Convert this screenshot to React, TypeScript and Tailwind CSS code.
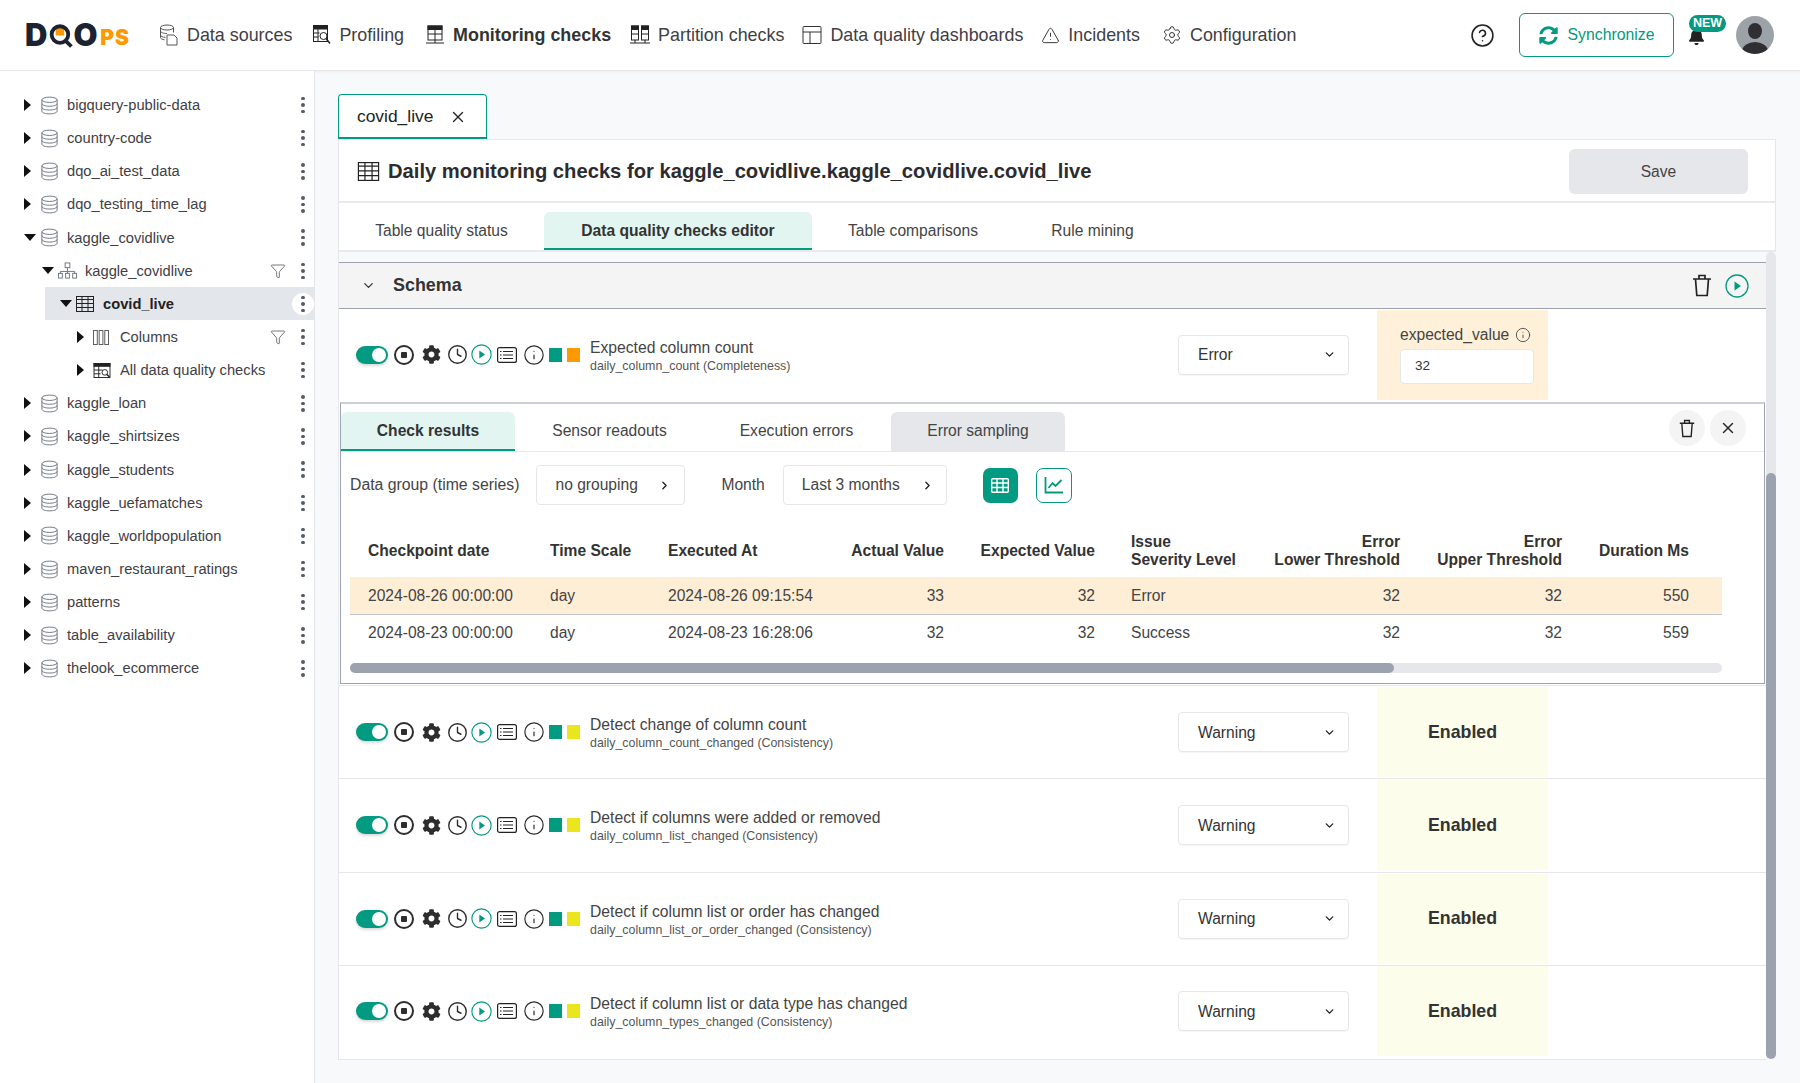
import { ChevronDown, ChevronRight, CircleHelp, Clock, Filter, Info, Settings, TriangleAlert, X } from 'lucide-react';
import { FaBell, FaCog, FaSyncAlt } from 'react-icons/fa';

// --- small drawn icons ---
function DbIcon({ className = 'w-[19px] h-[19px] text-[#6b7280]' }: { className?: string }) {
  return (
    <svg viewBox="0 0 20 20" fill="none" stroke="currentColor" strokeWidth="1" className={className}>
      <ellipse cx="10" cy="4" rx="8" ry="2.8" />
      <path d="M2 4v12c0 1.6 3.6 2.8 8 2.8s8-1.2 8-2.8V4" />
      <path d="M2 8c0 1.6 3.6 2.8 8 2.8s8-1.2 8-2.8" />
      <path d="M2 12c0 1.6 3.6 2.8 8 2.8s8-1.2 8-2.8" />
    </svg>
  );
}

function SchemaIcon() {
  return (
    <svg viewBox="0 0 20 18" fill="none" stroke="#6b7280" strokeWidth="1" className="w-[19px] h-[17px]">
      <rect x="7.5" y="1" width="5" height="5" />
      <path d="M10 6v4M2.5 12v-2h15v2M10 10v2" />
      <rect x="0.5" y="12" width="4" height="5" />
      <rect x="8" y="12" width="4" height="5" />
      <rect x="15.5" y="12" width="4" height="5" />
    </svg>
  );
}

function TableIcon({ className = 'w-[18px] h-[16px]' }: { className?: string }) {
  return (
    <svg viewBox="0 0 18 16" fill="none" stroke="#222" strokeWidth="1" className={className}>
      <rect x="0.5" y="0.5" width="17" height="15" />
      <path d="M0.5 3.5h17M0.5 7.5h17M0.5 11.5h17M6 0.5v15M12 0.5v15" />
    </svg>
  );
}

function ColumnsIcon() {
  return (
    <svg viewBox="0 0 18 16" fill="none" stroke="#555" strokeWidth="1" className="w-[17px] h-[15px]">
      <rect x="0.5" y="0.5" width="4" height="15" />
      <rect x="6.5" y="0.5" width="4" height="15" />
      <rect x="12.5" y="0.5" width="4" height="15" />
    </svg>
  );
}

function AllChecksIcon() {
  return (
    <svg viewBox="0 0 18 16" fill="none" stroke="#222" strokeWidth="1" className="w-[18px] h-[15px]">
      <rect x="0.5" y="0.5" width="17" height="15" />
      <rect x="0.5" y="0.5" width="17" height="3" fill="#222" />
      <path d="M0.5 7.5h9M0.5 11.5h7M5.5 3.5v12" />
      <circle cx="12" cy="10" r="3" />
      <path d="M14 12l3 3" strokeWidth="1.5" />
    </svg>
  );
}

function Dots({ active }: { active?: boolean }) {
  return (
    <span className={`flex w-[22px] h-[22px] flex-col items-center justify-center gap-[3px] rounded-full ${active ? 'bg-white' : ''}`}>
      <span className="w-[3.5px] h-[3.5px] rounded-full bg-[#555b66]" />
      <span className="w-[3.5px] h-[3.5px] rounded-full bg-[#555b66]" />
      <span className="w-[3.5px] h-[3.5px] rounded-full bg-[#555b66]" />
    </span>
  );
}

function Caret({ open }: { open?: boolean }) {
  return open ? (
    <span className="w-0 h-0 border-x-[6px] border-x-transparent border-t-[7px] border-t-[#111]" />
  ) : (
    <span className="w-0 h-0 border-y-[6px] border-y-transparent border-l-[7px] border-l-[#111]" />
  );
}

function TrashIcon({ className = 'w-[20px] h-[23px]' }: { className?: string }) {
  return (
    <svg viewBox="0 0 20 23" fill="none" stroke="#222" strokeWidth="1.7" className={className}>
      <path d="M1 5h18M3.5 5l1.3 16.5h10.4L16.5 5M7 5V1.5h6V5" />
    </svg>
  );
}

function PlayIcon({ className }: { className: string }) {
  return (
    <svg viewBox="0 0 24 24" className={className}>
      <circle cx="12" cy="12" r="11" fill="none" stroke="#029a80" strokeWidth="1.3" />
      <path d="M9.5 7.5l6.5 4.5-6.5 4.5z" fill="#029a80" />
    </svg>
  );
}

function DataSourcesIcon() {
  return (
    <svg viewBox="0 0 20 22" fill="none" stroke="#555" strokeWidth="1" className="w-[20px] h-[22px]">
      <ellipse cx="8" cy="3.5" rx="6.5" ry="2.5" />
      <path d="M1.5 3.5v10c0 1 1.5 2 4 2.3M14.5 3.5v5M1.5 7c0 1.4 3 2.5 6.5 2.5M1.5 11c0 1.2 2 2.2 5 2.4" />
      <path d="M8 11h7l3 3v7H8z" />
    </svg>
  );
}

function ProfilingIcon() {
  return (
    <svg viewBox="0 0 18 20" fill="none" stroke="#222" strokeWidth="1" className="w-[18px] h-[20px]">
      <rect x="0.5" y="0.5" width="14" height="16" />
      <rect x="0.5" y="0.5" width="14" height="3.5" fill="#222" />
      <path d="M0.5 8h6M0.5 12h5M5 4v12" />
      <circle cx="10.5" cy="11" r="3.5" fill="#fff" />
      <path d="M13 13.5l4 5" strokeWidth="1.5" />
    </svg>
  );
}

function MonitoringIcon() {
  return (
    <svg viewBox="0 0 20 20" fill="none" stroke="#222" strokeWidth="1" className="w-[20px] h-[20px]">
      <rect x="3" y="1" width="14" height="14" />
      <rect x="3" y="1" width="14" height="3.5" fill="#222" />
      <path d="M3 9h14M10 4.5V15M10 15v3M1 18h18" />
    </svg>
  );
}

function PartitionIcon() {
  return (
    <svg viewBox="0 0 20 20" fill="none" stroke="#222" strokeWidth="1" className="w-[20px] h-[20px]">
      <rect x="1.5" y="1" width="7" height="14" />
      <rect x="1.5" y="1" width="7" height="3.5" fill="#222" />
      <path d="M1.5 9h7M5 15v3" />
      <rect x="11.5" y="1" width="7" height="14" />
      <rect x="11.5" y="1" width="7" height="3.5" fill="#222" />
      <path d="M11.5 9h7M15 15v3M0 18h20" />
    </svg>
  );
}

function DashboardIcon() {
  return (
    <svg viewBox="0 0 20 20" fill="none" stroke="#333" strokeWidth="1" className="w-[20px] h-[20px]">
      <rect x="1" y="1.5" width="18" height="17" rx="1" />
      <path d="M1 7h18M8 7v11.5" />
    </svg>
  );
}

function Avatar() {
  return (
    <svg viewBox="0 0 38 38" className="w-[38px] h-[38px]">
      <defs>
        <clipPath id="av">
          <circle cx="19" cy="19" r="19" />
        </clipPath>
      </defs>
      <circle cx="19" cy="19" r="19" fill="#9ca3a8" />
      <g clipPath="url(#av)" fill="#2f2f33">
        <ellipse cx="19" cy="15" rx="7" ry="8" />
        <ellipse cx="19" cy="35" rx="13" ry="9" />
      </g>
    </svg>
  );
}

function Logo() {
  return (
    <div className="flex items-end w-[105px] h-[24px] font-['Inter',sans-serif] text-[#1d2230]">
      <span className="text-[31px] leading-[24px] font-black tracking-[-1px] w-[23px]">D</span>
      <svg viewBox="0 0 29 26" className="w-[28px] h-[26px] -mb-[2px]">
        <rect x="8" y="4.5" width="9" height="8" fill="#f90" />
        <circle cx="12.5" cy="11.5" r="8.7" fill="none" stroke="#1d2230" strokeWidth="4" />
        <path d="M18.5 18l6 6" stroke="#1d2230" strokeWidth="4" />
      </svg>
      <span className="-ml-[2px] text-[31px] leading-[24px] font-black w-[27px]">O</span>
      <span className="text-[21px] leading-[18px] font-black tracking-[1px] text-[#ff9900]">PS</span>
    </div>
  );
}

// --- data ---
const navItems = [
  { label: 'Data sources', cls: 'ml-0', icon: <DataSourcesIcon /> },
  { label: 'Profiling', cls: 'ml-[21px]', icon: <ProfilingIcon /> },
  { label: 'Monitoring checks', cls: 'ml-[21px]', icon: <MonitoringIcon />, active: true },
  { label: 'Partition checks', cls: 'ml-[19px]', icon: <PartitionIcon /> },
  { label: 'Data quality dashboards', cls: 'ml-[18px]', icon: <DashboardIcon /> },
  { label: 'Incidents', cls: 'ml-[18px]', icon: <TriangleAlert className="w-[19px] h-[19px] text-[#333]" strokeWidth={1.2} /> },
  { label: 'Configuration', cls: 'ml-[22px]', icon: <Settings className="w-[20px] h-[20px] text-[#333]" strokeWidth={1.2} /> },
];

const treeRows = [
  { label: 'bigquery-public-data', level: 0 },
  { label: 'country-code', level: 0 },
  { label: 'dqo_ai_test_data', level: 0 },
  { label: 'dqo_testing_time_lag', level: 0 },
  { label: 'kaggle_covidlive', level: 0, open: true },
  { label: 'kaggle_covidlive', level: 1, open: true, filter: true, kind: 'schema' },
  { label: 'covid_live', level: 2, open: true, kind: 'table', active: true },
  { label: 'Columns', level: 3, filter: true, kind: 'columns' },
  { label: 'All data quality checks', level: 3, kind: 'checks' },
  { label: 'kaggle_loan', level: 0 },
  { label: 'kaggle_shirtsizes', level: 0 },
  { label: 'kaggle_students', level: 0 },
  { label: 'kaggle_uefamatches', level: 0 },
  { label: 'kaggle_worldpopulation', level: 0 },
  { label: 'maven_restaurant_ratings', level: 0 },
  { label: 'patterns', level: 0 },
  { label: 'table_availability', level: 0 },
  { label: 'thelook_ecommerce', level: 0 },
];

const levelPadding = ['pl-[24px]', 'pl-[42px]', 'pl-[60px]', 'pl-[77px]'];

const warningChecks = [
  { title: 'Detect change of column count', sub: 'daily_column_count_changed (Consistency)' },
  { title: 'Detect if columns were added or removed', sub: 'daily_column_list_changed (Consistency)' },
  { title: 'Detect if column list or order has changed', sub: 'daily_column_list_or_order_changed (Consistency)' },
  { title: 'Detect if column list or data type has changed', sub: 'daily_column_types_changed (Consistency)' },
];

const resultRows = [
  { date: '2024-08-26 00:00:00', at: '2024-08-26 09:15:54', actual: 33, severity: 'Error', duration: 550, cls: 'bg-[#ffeed6]' },
  { date: '2024-08-23 00:00:00', at: '2024-08-23 16:28:06', actual: 32, severity: 'Success', duration: 559, cls: '' },
];

function TreeRow({ row }: { row: (typeof treeRows)[number] }) {
  return (
    <div className={`flex items-center h-[33.15px] ${row.active ? 'bg-[#e3e6ea] ml-[45px] pl-[15px] font-bold text-[#222]' : levelPadding[row.level]}`}>
      <span className="w-[16px] flex justify-start shrink-0">
        <Caret open={row.open} />
      </span>
      <span className="w-[27px] shrink-0 flex items-center">
        {row.kind === 'schema' ? <SchemaIcon /> : row.kind === 'table' ? <TableIcon /> : row.kind === 'columns' ? <ColumnsIcon /> : row.kind === 'checks' ? <AllChecksIcon /> : <DbIcon />}
      </span>
      <span className="flex-1 truncate text-[14.7px]">{row.label}</span>
      {row.filter && <Filter className="w-[16px] h-[16px] text-[#333] mr-[6px]" strokeWidth={1} />}
      <Dots active={row.active} />
    </div>
  );
}

function SelectBox({ value }: { value: string }) {
  return (
    <div className="w-[171px] h-[40px] shrink-0 flex items-center justify-between pl-[19px] pr-[12px] border border-[#e5e7eb] rounded-[4px] bg-white text-[15.6px] text-[#333] shadow-[0_1px_1px_rgba(0,0,0,0.04)]">
      {value}
      <ChevronDown className="w-[13px] h-[13px] text-[#222]" strokeWidth={2.5} />
    </div>
  );
}

function CheckIcons({ tint }: { tint: string }) {
  return (
    <div className="flex items-center shrink-0 w-[234px] text-[#2d2d2d]">
      <span className="flex items-center justify-end w-[32px] h-[18px] rounded-full bg-[#029a80] pr-[2px] shadow-[0_2px_3px_rgba(0,0,0,0.15)]">
        <span className="w-[14px] h-[14px] rounded-full bg-white" />
      </span>
      <span className="ml-[6px] w-[20px] h-[20px] rounded-full border-2 border-[#2d2d2d] flex items-center justify-center">
        <span className="w-[6px] h-[6px] bg-[#2d2d2d] rounded-[1px]" />
      </span>
      <FaCog className="ml-[8px] w-[19px] h-[19px]" />
      <Clock className="ml-[6px] w-[21px] h-[21px]" strokeWidth={1.6} />
      <PlayIcon className="ml-[3px] w-[21px] h-[21px]" />
      <svg viewBox="0 0 20 16" fill="none" stroke="#222" strokeWidth="1.2" className="ml-[5px] w-[20px] h-[16px]">
        <rect x="0.6" y="0.6" width="18.8" height="14.8" rx="2" />
        <path d="M6 4.5h10M6 8h10M6 11.5h10" />
        <path d="M3 4.5h1.5M3 8h1.5M3 11.5h1.5" />
      </svg>
      <Info className="ml-[6px] w-[22px] h-[22px]" strokeWidth={1.3} />
      <span className="ml-[4px] w-[13px] h-[14px] bg-[#029a80]" />
      <span className={`ml-[5px] w-[13px] h-[14px] ${tint}`} />
    </div>
  );
}

function CheckRow({ title, sub, severity, tint, children, last }: { title: string; sub: string; severity: string; tint: string; children: React.ReactNode; last?: boolean }) {
  return (
    <div className={`flex items-center h-[93.2px] pl-[17px] bg-white ${last ? 'pb-[2px]' : 'border-b border-[#e5e7eb]'}`}>
      <CheckIcons tint={tint} />
      <div className="w-[588px] shrink-0 pr-2 pt-[2px]">
        <div className="text-[15.7px] leading-[20px] text-[#444]">{title}</div>
        <div className="text-[12.4px] leading-[16px] text-[#555]">{sub}</div>
      </div>
      <SelectBox value={severity} />
      {children}
    </div>
  );
}

function HeaderCell({ children, right, last }: { children: React.ReactNode; right?: boolean; last?: boolean }) {
  return (
    <th className={`align-middle pt-[8px] font-bold leading-[17.5px] text-[#333] ${right ? 'text-right' : 'text-left'} ${last ? 'pr-[33px]' : right ? 'pr-[18px]' : 'pl-[18px]'}`}>
      {children}
    </th>
  );
}

export default function App() {
  return (
    <div className="w-full h-[1083px] overflow-hidden bg-[#f8f9fb] flex flex-col font-['Liberation_Sans',Arial,sans-serif] text-[#3f4045]">
      {/* Top navigation */}
      <header className="h-[71px] shrink-0 bg-white border-b border-[#e5e7eb] shadow-[0_1px_3px_rgba(0,0,0,0.05)] flex items-center pl-[25px] pr-[26px]">
        <Logo />
        <nav className="flex items-center ml-[29px] pt-[1px] text-[17.9px]">
          {navItems.map(item => (
            <div key={item.label} className={`flex items-center gap-[8px] ${item.cls} ${item.active ? 'font-bold text-[#333]' : ''}`}>
              {item.icon}
              {item.label}
            </div>
          ))}
        </nav>
        <div className="ml-auto flex items-center">
          <CircleHelp className="w-[25px] h-[25px] text-[#222]" strokeWidth={1.5} />
          <div className="ml-[24px] w-[155px] h-[44px] flex items-center justify-center gap-[10px] border border-[#029a80] rounded-[6px] text-[15.8px] text-[#029a80]">
            <FaSyncAlt className="w-[19px] h-[19px]" />
            Synchronize
          </div>
          <div className="relative ml-[14px] w-[48px] h-[44px] flex items-center">
            <FaBell className="w-[17px] h-[17px] text-[#222] mt-[3px]" />
            <span className="absolute left-[1px] top-[2px] h-[17px] px-[4px] rounded-full bg-[#029a80] text-white text-[12.5px] leading-[17px] font-bold">NEW</span>
          </div>
          <Avatar />
        </div>
      </header>

      <div className="flex flex-1 min-h-0">
        {/* Sidebar tree */}
        <aside className="w-[315px] shrink-0 bg-white border-r border-[#e5e7eb] pt-[17.5px]">
          {treeRows.map((row, i) => (
            <TreeRow key={i} row={row} />
          ))}
        </aside>

        {/* Main area */}
        <main className="flex-1 min-w-0 pl-[23px] pr-[24px] pt-[23px]">
          <div className="flex">
            <div className="w-[149px] h-[45px] flex items-center justify-between pl-[18px] pr-[19px] pt-[1px] bg-white border border-[#029a80] border-b-2 rounded-t-[4px] text-[17.4px] text-[#222]">
              covid_live
              <X className="w-[18px] h-[18px]" strokeWidth={1.8} />
            </div>
          </div>

          <div className="bg-white border-x border-[#e5e7eb]">
            <div className="h-[64px] flex items-center justify-between pl-[18px] pr-[27px] pt-[2px] border-t border-b-2 border-[#e9eaec]">
              <div className="flex items-center gap-[8px] text-[20.2px] font-bold text-[#2c2c2e]">
                <TableIcon className="w-[23px] h-[19px]" />
                Daily monitoring checks for kaggle_covidlive.kaggle_covidlive.covid_live
              </div>
              <div className="w-[179px] h-[45px] flex items-center justify-center rounded-[6px] bg-[#e5e7eb] text-[15.6px] text-[#444]">Save</div>
            </div>
            <div className="h-[49px] flex items-end border-b-2 border-[#e9eaec] text-[15.6px] text-[#444]">
              <div className="w-[205px] h-[38px] flex items-center justify-center">Table quality status</div>
              <div className="w-[268px] h-[38px] flex items-center justify-center pt-[2px] rounded-t-[6px] border-b-2 border-[#029a80] bg-[#e2f5f1] font-bold text-[#333]">Data quality checks editor</div>
              <div className="w-[202px] h-[38px] flex items-center justify-center">Table comparisons</div>
              <div className="w-[157px] h-[38px] flex items-center justify-center">Rule mining</div>
            </div>
          </div>

          <div className="flex">
            <div className="flex-1 min-w-0">
              <div className="h-[10px] border-l border-[#e5e7eb]" />
              <div className="h-[798px] border-l border-b-2 border-[#e5e7eb] bg-white">
                <div className="h-[47px] flex items-center justify-between pl-[22px] pr-[17px] border-y border-[#9ca3af] bg-[#f4f4f4]">
                  <div className="flex items-center gap-[17px] text-[17.9px] font-bold text-[#333]">
                    <ChevronDown className="w-[15px] h-[15px]" strokeWidth={2} />
                    Schema
                  </div>
                  <div className="flex items-center gap-[13px]">
                    <TrashIcon />
                    <PlayIcon className="w-[24px] h-[24px]" />
                  </div>
                </div>

                <CheckRow title="Expected column count" sub="daily_column_count (Completeness)" severity="Error" tint="bg-[#ff9900]" last>
                  <div className="ml-[28px] w-[171px] h-[90px] bg-[#fff0d9] pl-[23px] pt-[15px]">
                    <div className="flex items-center gap-[6px] text-[15.6px] leading-[20px] text-[#444]">
                      expected_value
                      <Info className="w-[16px] h-[16px]" strokeWidth={1.3} />
                    </div>
                    <div className="mt-[4px] w-[134px] h-[35px] flex items-center pl-[14px] bg-white border border-[#e5e7eb] rounded-[4px] text-[13.5px] text-[#333]">32</div>
                  </div>
                </CheckRow>

                {/* Expanded results panel */}
                <div className="ml-[1px] mr-[1px] h-[282px] border border-t-2 border-[#9ca3af] border-t-[#ccd0d5] bg-white">
                  <div className="h-[48px] flex items-end justify-between border-b border-[#e5e7eb] text-[15.6px] text-[#444]">
                    <div className="flex items-end">
                      <div className="w-[174px] h-[39px] flex items-center justify-center rounded-t-[6px] border-b-2 border-[#029a80] bg-[#e2f5f1] font-bold text-[#333]">Check results</div>
                      <div className="w-[189px] h-[39px] flex items-center justify-center pb-[2px]">Sensor readouts</div>
                      <div className="w-[185px] h-[39px] flex items-center justify-center pb-[2px]">Execution errors</div>
                      <div className="ml-[2px] w-[174px] h-[39px] flex items-center justify-center pb-[2px] rounded-t-[6px] bg-[#e5e7eb]">Error sampling</div>
                    </div>
                    <div className="flex items-center gap-[5px] pr-[18px] pb-[5px]">
                      <span className="w-[36px] h-[36px] flex items-center justify-center rounded-full bg-[#f4f4f4]">
                        <TrashIcon className="w-[16px] h-[19px]" />
                      </span>
                      <span className="w-[36px] h-[36px] flex items-center justify-center rounded-full bg-[#f4f4f4]">
                        <X className="w-[18px] h-[18px] text-[#222]" strokeWidth={1.8} />
                      </span>
                    </div>
                  </div>

                  <div className="h-[64px] flex items-center pl-[9px] pt-[2px] text-[15.6px] text-[#444]">
                    <span className="text-[15.8px]">Data group (time series)</span>
                    <div className="ml-[17px] w-[149px] h-[40px] flex items-center justify-between pl-[18px] pr-[13px] border border-[#e5e7eb] rounded-[4px]">
                      no grouping
                      <ChevronRight className="w-[13px] h-[13px] text-[#222]" strokeWidth={2.5} />
                    </div>
                    <span className="ml-[36px]">Month</span>
                    <div className="ml-[18px] w-[164px] h-[40px] flex items-center justify-between pl-[18px] pr-[12px] border border-[#e5e7eb] rounded-[4px]">
                      Last 3 months
                      <ChevronRight className="w-[13px] h-[13px] text-[#222]" strokeWidth={2.5} />
                    </div>
                    <span className="ml-[36px] w-[35px] h-[35px] flex items-center justify-center rounded-[7px] bg-[#029a80]">
                      <svg viewBox="0 0 18 15" fill="none" stroke="#fff" strokeWidth="1.4" className="w-[18px] h-[15px]">
                        <rect x="0.7" y="0.7" width="16.6" height="13.6" rx="1" />
                        <path d="M0.7 5h16.6M0.7 9.5h16.6M6 0.7v13.6M12 0.7v13.6" />
                      </svg>
                    </span>
                    <span className="ml-[18px] w-[36px] h-[35px] flex items-center justify-center rounded-[7px] border border-[#029a80]">
                      <svg viewBox="0 0 20 18" fill="none" stroke="#029a80" strokeWidth="1.8" className="w-[20px] h-[18px]">
                        <path d="M1.5 1v15.5H19" />
                        <path d="M4.5 12l4-5 3 3 6-6" />
                      </svg>
                    </span>
                  </div>

                  <div className="ml-[9px] w-[1372px]">
                    <table className="w-full table-fixed border-collapse text-[15.6px] text-[#444]">
                      <colgroup>
                        <col className="w-[182px]" />
                        <col className="w-[118px]" />
                        <col className="w-[180px]" />
                        <col className="w-[132px]" />
                        <col className="w-[151px]" />
                        <col className="w-[137px]" />
                        <col className="w-[168px]" />
                        <col className="w-[162px]" />
                        <col className="w-[142px]" />
                      </colgroup>
                      <thead>
                        <tr className="h-[61px]">
                          <HeaderCell>Checkpoint date</HeaderCell>
                          <HeaderCell>Time Scale</HeaderCell>
                          <HeaderCell>Executed At</HeaderCell>
                          <HeaderCell right>Actual Value</HeaderCell>
                          <HeaderCell right>Expected Value</HeaderCell>
                          <HeaderCell>
                            Issue
                            <br />
                            Severity Level
                          </HeaderCell>
                          <HeaderCell right>
                            Error
                            <br />
                            Lower Threshold
                          </HeaderCell>
                          <HeaderCell right>
                            Error
                            <br />
                            Upper Threshold
                          </HeaderCell>
                          <HeaderCell right last>Duration Ms</HeaderCell>
                        </tr>
                      </thead>
                      <tbody>
                        {resultRows.map((r, i) => (
                          <tr key={r.date} className={`h-[37px] ${r.cls} ${i === 0 ? 'border-b border-[#c4c7cc]' : ''}`}>
                            <td className="pl-[18px]">{r.date}</td>
                            <td className="pl-[18px]">day</td>
                            <td className="pl-[18px]">{r.at}</td>
                            <td className="pr-[18px] text-right">{r.actual}</td>
                            <td className="pr-[18px] text-right">32</td>
                            <td className="pl-[18px]">{r.severity}</td>
                            <td className="pr-[18px] text-right">32</td>
                            <td className="pr-[18px] text-right">32</td>
                            <td className="pr-[33px] text-right">{r.duration}</td>
                          </tr>
                        ))}
                      </tbody>
                    </table>
                    <div className="mt-[12px] h-[10px] rounded-full bg-[#e5e7eb]">
                      <div className="w-[1044px] h-full rounded-full bg-[#9ca3af]" />
                    </div>
                  </div>
                </div>

                <div className="h-[1px]" />
                <div className="border-t border-[#e5e7eb]">
                  {warningChecks.map((c, i) => (
                    <CheckRow key={c.sub} title={c.title} sub={c.sub} severity="Warning" tint="bg-[#ebe51e]" last={i === warningChecks.length - 1}>
                      <div className="ml-[28px] w-[171px] h-[90px] flex items-center justify-center bg-[#fdfdec] text-[17.8px] font-bold text-[#333]">Enabled</div>
                    </CheckRow>
                  ))}
                </div>
              </div>
            </div>
            {/* Page scrollbar */}
            <div className="w-[10px] h-[807px] flex flex-col rounded-full bg-[#e5e7eb]">
              <div className="flex-1 mt-[221px] rounded-full bg-[#9ca3af]" />
            </div>
          </div>
        </main>
      </div>
    </div>
  );
}
